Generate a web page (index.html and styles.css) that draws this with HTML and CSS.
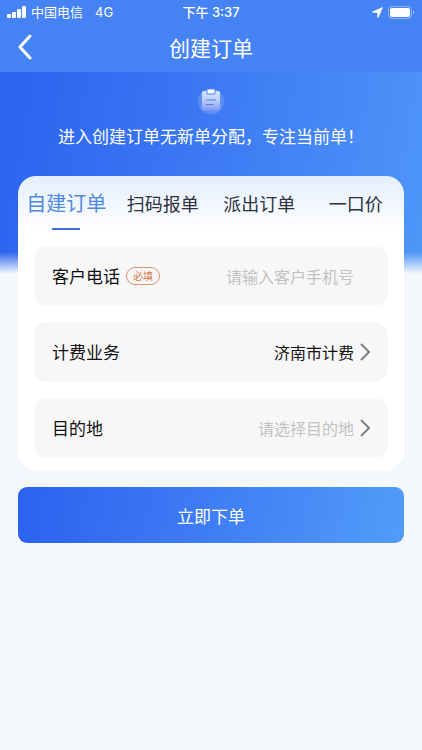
FILE: index.html
```html
<!DOCTYPE html>
<html lang="zh-CN">
<head>
<meta charset="utf-8">
<meta name="viewport" content="width=device-width, initial-scale=1">
<title>创建订单</title>
<link rel="stylesheet" href="styles.css">
</head>
<body>
<header class="topbar">
  <div class="status">
    <div class="status-left">
      <svg class="signal" viewBox="0 0 19 12" aria-hidden="true"><rect x="0" y="8" width="4" height="4" rx="1"/><rect x="5" y="6" width="4" height="6" rx="1"/><rect x="10" y="3" width="4" height="9" rx="1"/><rect x="15" y="0" width="4" height="12" rx="1"/></svg>
      <span>中国电信</span>
      <span class="network">4G</span>
    </div>
    <time class="clock">下午 3:37</time>
    <div class="status-right">
      <svg class="location" viewBox="0 0 11 11" aria-hidden="true"><path d="M10.700.9C10.900.4 10.600.1 10.100.3L.6 4.500c-.7.3-.5 1.200.2 1.200l4.400.1.1 4.400c0 .7.9.9 1.200.2z"/></svg>
      <svg class="battery" viewBox="0 0 27 13" aria-hidden="true"><rect class="battery-shell" x=".5" y=".5" width="23" height="12" rx="3.500"/><rect x="2" y="2" width="20" height="9" rx="2"/><path class="battery-cap" d="M25 4.500c1.600.4 1.600 3.600 0 4z"/></svg>
    </div>
  </div>
  <nav class="nav">
    <button class="back" type="button" aria-label="返回"><svg viewBox="0 0 14 26" aria-hidden="true"><path d="M12 2 2 13l10 11"/></svg></button>
    <h1 class="title">创建订单</h1>
  </nav>
</header>
<main class="page">
  <section class="hero">
    <svg class="clipboard" viewBox="0 0 28 28" aria-hidden="true">
      <defs><linearGradient id="sheet" x1="0" y1="0" x2="0" y2="1"><stop offset="0" stop-color="#d5e6ff"/><stop offset=".5" stop-color="#b9ccfb"/><stop offset="1" stop-color="#8296f4"/></linearGradient></defs>
      <circle cx="14" cy="14.500" r="13" fill="#fff" fill-opacity=".17"/>
      <path d="M7 4h14q2 0 2 2v15q0 2.500-2.500 2.500h-13Q5 23.500 5 21V6q0-2 2-2z" fill="url(#sheet)"/>
      <path d="M9.500 3h9v3q0 1.500-1.500 1.500h-6Q9.500 7.500 9.500 6z" fill="#4f83ef"/>
      <rect x="10.500" y="2.500" width="7" height="4" rx=".7" fill="#fff"/>
      <path d="M9.500 13h9M9.500 17.500h6.500" fill="none" stroke="#547fe3" stroke-width="1.200" stroke-linecap="round"/>
    </svg>
    <p class="notice">进入创建订单无新单分配，专注当前单！</p>
  </section>
  <form class="form">
    <section class="card">
      <div class="tabs" role="tablist">
        <button class="tab tab-active" type="button" role="tab" aria-selected="true">自建订单</button>
        <button class="tab" type="button" role="tab" aria-selected="false">扫码报单</button>
        <button class="tab" type="button" role="tab" aria-selected="false">派出订单</button>
        <button class="tab" type="button" role="tab" aria-selected="false">一口价</button>
      </div>
      <div class="fields">
        <div class="row">
          <label class="label" for="phone">客户电话</label>
          <span class="badge">必填</span>
          <input class="value phone" id="phone" type="tel" placeholder="请输入客户手机号">
        </div>
        <button class="row" type="button">
          <span class="label">计费业务</span>
          <span class="value">济南市计费</span>
          <svg class="arrow" viewBox="0 0 10 18" aria-hidden="true"><path d="m1 1 8 8-8 8"/></svg>
        </button>
        <button class="row" type="button">
          <span class="label">目的地</span>
          <span class="value value-empty">请选择目的地</span>
          <svg class="arrow" viewBox="0 0 10 18" aria-hidden="true"><path d="m1 1 8 8-8 8"/></svg>
        </button>
      </div>
    </section>
    <button class="submit" type="submit">立即下单</button>
  </form>
</main>
</body>
</html>
```
FILE: styles.css
```css
* {
  box-sizing: border-box;
}

body {
  margin: 0;
  min-height: 100vh;
  background: #f4f8fc;
  color: #111;
  font-family: "Noto Sans CJK SC", sans-serif;
  font-weight: 400;
}

button,
input {
  margin: 0;
  padding: 0;
  border: 0;
  background: none;
  color: inherit;
  font: inherit;
}

.topbar {
  background: #4583f5;
  color: #fff;
}

.status {
  display: grid;
  grid-template-columns: 1fr auto 1fr;
  align-items: center;
  height: 24px;
  padding: 0 7px;
  font-size: 13px;
  line-height: 24px;
}

.status-left,
.status-right {
  display: flex;
  align-items: center;
}

.status-left {
  gap: 5px;
}

.status-right {
  justify-content: flex-end;
  gap: 5px;
}

.network {
  margin-left: 7px;
  font-family: Inter, sans-serif;
}

.clock {
  font-family: Inter, "Noto Sans CJK SC", sans-serif;
  font-weight: 500;
}

.signal {
  width: 19px;
  height: 12px;
  fill: #fff;
}

.location {
  width: 11px;
  height: 11px;
  fill: #fff;
}

.battery {
  width: 27px;
  height: 13px;
  fill: #fff;
}

.battery-shell {
  fill: none;
  stroke: #fff;
  stroke-opacity: 0.4;
}

.battery-cap {
  fill-opacity: 0.4;
}

.nav {
  display: grid;
  grid-template-columns: 48px 1fr 48px;
  align-items: start;
  height: 48px;
}

.back {
  display: flex;
  align-items: center;
  height: 46px;
  padding-left: 18px;
}

.back svg {
  width: 14px;
  height: 26px;
  fill: none;
  stroke: #fff;
  stroke-width: 3;
  stroke-linecap: round;
  stroke-linejoin: round;
}

.title {
  margin: 0;
  font-size: 21px;
  line-height: 46px;
  font-weight: 400;
  text-align: center;
}

.page {
  background:
    linear-gradient(to bottom, transparent 180px, #f4f8fc 202px),
    linear-gradient(100deg, #2b62ef, #3f7df4 50%, #529cf9);
}

.hero {
  display: flex;
  flex-direction: column;
  align-items: center;
  height: 104px;
  padding-top: 15px;
  color: #fff;
}

.clipboard {
  width: 28px;
  height: 28px;
}

.notice {
  margin: 8px 0 0;
  font-size: 17px;
  line-height: 26px;
}

.form {
  padding: 0 18px;
}

.card {
  padding-bottom: 12px;
  border-radius: 18px;
  background: linear-gradient(to bottom, #e4eefe, #fff 56px);
}

.tabs {
  display: grid;
  grid-template-columns: repeat(4, 1fr);
  height: 70px;
}

.tab {
  display: flex;
  flex-direction: column;
  align-items: center;
  height: 56px;
  font-size: 18px;
  line-height: 54px;
  color: #2c313b;
  white-space: nowrap;
}

.tab-active {
  color: #4f88e0;
  font-size: 20px;
}

.tab-active::after {
  content: "";
  width: 28px;
  height: 2px;
  flex: none;
  margin-top: -2px;
  background: #3e72da;
}

.fields {
  display: grid;
  gap: 16px;
  padding: 0 16px;
}

.row {
  display: flex;
  align-items: center;
  height: 60px;
  padding: 0 18px;
  border-radius: 14px;
  background: #f7f7f7;
  text-align: left;
}

.label {
  flex: none;
  font-size: 17px;
  line-height: 24px;
}

.badge {
  flex: none;
  width: 34px;
  margin-left: 6px;
  border: 1px solid #df9473;
  border-radius: 10px;
  color: #d9764c;
  font-size: 10px;
  line-height: 16px;
  text-align: center;
}

.value {
  flex: 1;
  min-width: 0;
  font-size: 16px;
  line-height: 24px;
  text-align: right;
}

.phone {
  margin-right: 16px;
  outline: none;
}

.phone::placeholder,
.value-empty {
  color: #c2c2c2;
}

.arrow {
  flex: none;
  width: 10px;
  height: 18px;
  margin-left: 6px;
  fill: none;
  stroke: #808080;
  stroke-width: 2;
}

.submit {
  display: block;
  width: 100%;
  height: 56px;
  margin-top: 17px;
  border-radius: 9px;
  background: linear-gradient(100deg, #2b62ef, #3f7df4 50%, #529cf9);
  color: #fff;
  font-size: 17px;
}
```
